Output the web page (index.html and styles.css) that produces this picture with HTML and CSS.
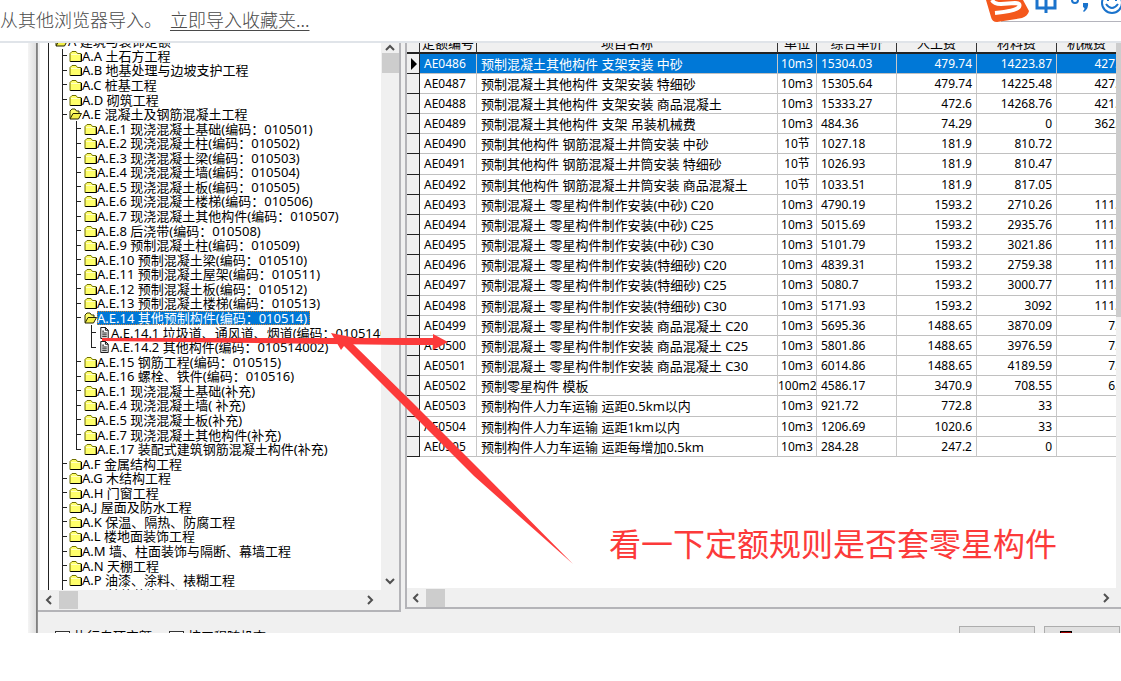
FILE: index.html
```html
<!DOCTYPE html>
<html lang="zh-CN">
<head>
<meta charset="utf-8">
<title>定额查询</title>
<link rel="stylesheet" href="styles.css">
</head>
<body>
<svg class="defs" aria-hidden="true">
  <symbol id="closed" viewBox="0 0 13 12"><path d="M1 3.5 3 1.5h4l1.5 2H12v8H1z" fill="#ffff6b" stroke="#6e6e00"/><path d="M1.5 11.5H12.5V4" fill="none" stroke="#000"/><path d="M2 4.5h9" stroke="#ffffc8"/></symbol>
  <symbol id="open" viewBox="0 0 13 12"><path d="M1 10.500V3l2-2h3l1.500 2H10v2.500" fill="#ffff6b" stroke="#333300"/><path d="M1 11 4 5.500h8.500L9.500 11z" fill="#f4f04a" stroke="#222200"/></symbol>
  <symbol id="doc" viewBox="0 0 13 13"><path d="M2.500.500h5l3 3v9h-8z" fill="#fff" stroke="#000"/><path d="M7.500.500v3h3M4 4.500h2M4 6.500h5M4 8.500h5M4 10.500h5" fill="none" stroke="#000"/></symbol>
</svg>

<header class="notice">
  <p class="notice-text">请从其他浏览器导入。 <a href="#">立即导入收藏夹...</a></p>
  <svg class="ime" viewBox="0 0 140 24" role="img" aria-label="输入法">
    <path d="M20 21.500H140" stroke="#b4b4bc"/>
    <path d="M5 0H42L48 11Q47 16 41 18L16 22Q11 22 10 17z" fill="#f4581c"/>
    <path d="M11 0Q13 4 20 4L34 3Q40 3 38 7Q35 11 14 13" fill="none" stroke="#fff" stroke-width="4"/>
    <path d="M56 0V8H74V0M65 0V13" fill="none" stroke="#1a73cc" stroke-width="3"/>
    <circle cx="94" cy="0" r="3" fill="none" stroke="#1a73cc" stroke-width="2"/>
    <path d="M102 3h5q1 5-4 9l-1-1q3-3 0-4z" fill="#1a73cc"/>
    <circle cx="131" cy="3" r="10" fill="none" stroke="#1a73cc" stroke-width="2"/>
    <path d="M125 4Q131 12 137 4M127 0v1M135 0v1" fill="none" stroke="#1a73cc" stroke-width="2"/>
  </svg>
</header>

<main class="shot">
  <div class="window">
    <div class="panes">
      <section class="tree-pane">
        <div class="tree-body">
          <div class="tree-view">
            <ul class="tree">
              <li class="l0"><svg><use href="#open"/></svg><span>A 建筑与装饰定额</span></li>
              <li class="l1"><svg><use href="#closed"/></svg><span>A.A 土石方工程</span></li>
              <li class="l1"><svg><use href="#closed"/></svg><span>A.B 地基处理与边坡支护工程</span></li>
              <li class="l1"><svg><use href="#closed"/></svg><span>A.C 桩基工程</span></li>
              <li class="l1"><svg><use href="#closed"/></svg><span>A.D 砌筑工程</span></li>
              <li class="l1"><svg><use href="#open"/></svg><span>A.E 混凝土及钢筋混凝土工程</span></li>
              <li class="l2"><svg><use href="#closed"/></svg><span>A.E.1 现浇混凝土基础(编码：010501)</span></li>
              <li class="l2"><svg><use href="#closed"/></svg><span>A.E.2 现浇混凝土柱(编码：010502)</span></li>
              <li class="l2"><svg><use href="#closed"/></svg><span>A.E.3 现浇混凝土梁(编码：010503)</span></li>
              <li class="l2"><svg><use href="#closed"/></svg><span>A.E.4 现浇混凝土墙(编码：010504)</span></li>
              <li class="l2"><svg><use href="#closed"/></svg><span>A.E.5 现浇混凝土板(编码：010505)</span></li>
              <li class="l2"><svg><use href="#closed"/></svg><span>A.E.6 现浇混凝土楼梯(编码：010506)</span></li>
              <li class="l2"><svg><use href="#closed"/></svg><span>A.E.7 现浇混凝土其他构件(编码：010507)</span></li>
              <li class="l2"><svg><use href="#closed"/></svg><span>A.E.8 后浇带(编码：010508)</span></li>
              <li class="l2"><svg><use href="#closed"/></svg><span>A.E.9 预制混凝土柱(编码：010509)</span></li>
              <li class="l2"><svg><use href="#closed"/></svg><span>A.E.10 预制混凝土梁(编码：010510)</span></li>
              <li class="l2"><svg><use href="#closed"/></svg><span>A.E.11 预制混凝土屋架(编码：010511)</span></li>
              <li class="l2"><svg><use href="#closed"/></svg><span>A.E.12 预制混凝土板(编码：010512)</span></li>
              <li class="l2"><svg><use href="#closed"/></svg><span>A.E.13 预制混凝土楼梯(编码：010513)</span></li>
              <li class="l2"><svg><use href="#open"/></svg><span class="picked">A.E.14 其他预制构件(编码：010514)</span></li>
              <li class="l3"><svg><use href="#doc"/></svg><span>A.E.14.1 垃圾道、通风道、烟道(编码：010514001)</span></li>
              <li class="l3 last"><svg><use href="#doc"/></svg><span>A.E.14.2 其他构件(编码：010514002)</span></li>
              <li class="l2"><svg><use href="#closed"/></svg><span>A.E.15 钢筋工程(编码：010515)</span></li>
              <li class="l2"><svg><use href="#closed"/></svg><span>A.E.16 螺栓、铁件(编码：010516)</span></li>
              <li class="l2"><svg><use href="#closed"/></svg><span>A.E.1 现浇混凝土基础(补充)</span></li>
              <li class="l2"><svg><use href="#closed"/></svg><span>A.E.4 现浇混凝土墙( 补充)</span></li>
              <li class="l2"><svg><use href="#closed"/></svg><span>A.E.5 现浇混凝土板(补充)</span></li>
              <li class="l2"><svg><use href="#closed"/></svg><span>A.E.7 现浇混凝土其他构件(补充)</span></li>
              <li class="l2 last"><svg><use href="#closed"/></svg><span>A.E.17 装配式建筑钢筋混凝土构件(补充)</span></li>
              <li class="l1"><svg><use href="#closed"/></svg><span>A.F 金属结构工程</span></li>
              <li class="l1"><svg><use href="#closed"/></svg><span>A.G 木结构工程</span></li>
              <li class="l1"><svg><use href="#closed"/></svg><span>A.H 门窗工程</span></li>
              <li class="l1"><svg><use href="#closed"/></svg><span>A.J 屋面及防水工程</span></li>
              <li class="l1"><svg><use href="#closed"/></svg><span>A.K 保温、隔热、防腐工程</span></li>
              <li class="l1"><svg><use href="#closed"/></svg><span>A.L 楼地面装饰工程</span></li>
              <li class="l1"><svg><use href="#closed"/></svg><span>A.M 墙、柱面装饰与隔断、幕墙工程</span></li>
              <li class="l1"><svg><use href="#closed"/></svg><span>A.N 天棚工程</span></li>
              <li class="l1"><svg><use href="#closed"/></svg><span>A.P 油漆、涂料、裱糊工程</span></li>
              <li class="l1"><svg><use href="#closed"/></svg><span>A.Q 其他装饰工程</span></li>
            </ul>
          </div>
          <div class="vbar">
            <svg class="arrow" viewBox="0 0 10 10"><path d="M1 7 5 3l4 4"/></svg>
            <div class="thumb"></div>
            <svg class="arrow end" viewBox="0 0 10 10"><path d="M1 3l4 4 4-4"/></svg>
          </div>
        </div>
        <div class="hbar tree-hbar">
          <svg class="arrow" viewBox="0 0 10 10"><path d="M7 1 3 5l4 4"/></svg>
          <div class="thumb"></div>
          <svg class="arrow end" viewBox="0 0 10 10"><path d="M3 1l4 4-4 4"/></svg>
        </div>
      </section>

      <section class="grid-pane">
        <div class="grid-body">
          <div class="grid-view">
            <table class="quota">
              <colgroup><col class="c-mark"><col class="c-code"><col class="c-name"><col class="c-unit"><col class="c-num"><col class="c-num"><col class="c-num"><col class="c-num"></colgroup>
              <thead><tr><th></th><th>定额编号</th><th>项目名称</th><th>单位</th><th>综合单价</th><th>人工费</th><th>材料费</th><th>机械费</th></tr></thead>
              <tbody>
                <tr class="current"><td><svg class="pointer" viewBox="0 0 8 12"><path d="M1 0l6 6-6 6z"/></svg></td><td>AE0486</td><td>预制混凝土其他构件 支架安装 中砂</td><td>10m3</td><td>15304.03</td><td>479.74</td><td>14223.87</td><td>427.92</td></tr>
                <tr><td></td><td>AE0487</td><td>预制混凝土其他构件 支架安装 特细砂</td><td>10m3</td><td>15305.64</td><td>479.74</td><td>14225.48</td><td>427.92</td></tr>
                <tr><td></td><td>AE0488</td><td>预制混凝土其他构件 支架安装 商品混凝土</td><td>10m3</td><td>15333.27</td><td>472.6</td><td>14268.76</td><td>421.92</td></tr>
                <tr><td></td><td>AE0489</td><td>预制混凝土其他构件 支架 吊装机械费</td><td>10m3</td><td>484.36</td><td>74.29</td><td>0</td><td>362.92</td></tr>
                <tr><td></td><td>AE0490</td><td>预制其他构件 钢筋混凝土井筒安装 中砂</td><td>10节</td><td>1027.18</td><td>181.9</td><td>810.72</td><td></td></tr>
                <tr><td></td><td>AE0491</td><td>预制其他构件 钢筋混凝土井筒安装 特细砂</td><td>10节</td><td>1026.93</td><td>181.9</td><td>810.47</td><td></td></tr>
                <tr><td></td><td>AE0492</td><td>预制其他构件 钢筋混凝土井筒安装 商品混凝土</td><td>10节</td><td>1033.51</td><td>181.9</td><td>817.05</td><td></td></tr>
                <tr><td></td><td>AE0493</td><td>预制混凝土 零星构件制作安装(中砂) C20</td><td>10m3</td><td>4790.19</td><td>1593.2</td><td>2710.26</td><td>111.92</td></tr>
                <tr><td></td><td>AE0494</td><td>预制混凝土 零星构件制作安装(中砂) C25</td><td>10m3</td><td>5015.69</td><td>1593.2</td><td>2935.76</td><td>111.92</td></tr>
                <tr><td></td><td>AE0495</td><td>预制混凝土 零星构件制作安装(中砂) C30</td><td>10m3</td><td>5101.79</td><td>1593.2</td><td>3021.86</td><td>111.92</td></tr>
                <tr><td></td><td>AE0496</td><td>预制混凝土 零星构件制作安装(特细砂) C20</td><td>10m3</td><td>4839.31</td><td>1593.2</td><td>2759.38</td><td>111.92</td></tr>
                <tr><td></td><td>AE0497</td><td>预制混凝土 零星构件制作安装(特细砂) C25</td><td>10m3</td><td>5080.7</td><td>1593.2</td><td>3000.77</td><td>111.92</td></tr>
                <tr><td></td><td>AE0498</td><td>预制混凝土 零星构件制作安装(特细砂) C30</td><td>10m3</td><td>5171.93</td><td>1593.2</td><td>3092</td><td>111.92</td></tr>
                <tr><td></td><td>AE0499</td><td>预制混凝土 零星构件制作安装 商品混凝土 C20</td><td>10m3</td><td>5695.36</td><td>1488.65</td><td>3870.09</td><td>7.92</td></tr>
                <tr><td></td><td>AE0500</td><td>预制混凝土 零星构件制作安装 商品混凝土 C25</td><td>10m3</td><td>5801.86</td><td>1488.65</td><td>3976.59</td><td>7.92</td></tr>
                <tr><td></td><td>AE0501</td><td>预制混凝土 零星构件制作安装 商品混凝土 C30</td><td>10m3</td><td>6014.86</td><td>1488.65</td><td>4189.59</td><td>7.92</td></tr>
                <tr><td></td><td>AE0502</td><td>预制零星构件 模板</td><td>100m2</td><td>4586.17</td><td>3470.9</td><td>708.55</td><td>6.92</td></tr>
                <tr><td></td><td>AE0503</td><td>预制构件人力车运输 运距0.5km以内</td><td>10m3</td><td>921.72</td><td>772.8</td><td>33</td><td></td></tr>
                <tr><td></td><td>AE0504</td><td>预制构件人力车运输 运距1km以内</td><td>10m3</td><td>1206.69</td><td>1020.6</td><td>33</td><td></td></tr>
                <tr><td></td><td>AE0505</td><td>预制构件人力车运输 运距每增加0.5km</td><td>10m3</td><td>284.28</td><td>247.2</td><td>0</td><td></td></tr>
              </tbody>
            </table>
          </div>
          <div class="vbar edge"><div class="thumb"></div></div>
        </div>
        <div class="hbar grid-hbar">
          <svg class="arrow" viewBox="0 0 10 10"><path d="M7 1 3 5l4 4"/></svg>
          <div class="thumb"></div>
          <svg class="arrow end" viewBox="0 0 10 10"><path d="M3 1l4 4-4 4"/></svg>
        </div>
      </section>
    </div>

    <footer class="options">
      <label><input type="checkbox">执行专项定额</label>
      <label><input type="checkbox">按工程随机查</label>
      <div class="actions">
        <button type="button" aria-label="确定"></button>
        <button type="button" aria-label="关闭"><i class="door"></i></button>
      </div>
    </footer>
  </div>
</main>

<svg class="marks" width="600" height="580" viewBox="0 0 600 580" aria-hidden="true">
  <path d="M102 338 405 338H433V334L448 342 433 350V345H405L102 341z"/>
  <path d="M331 333 356 338 351 342 411 401 480 470 573 564 474 476 410 412 344 346 341 350z"/>
</svg>
<p class="remark">看一下定额规则是否套零星构件</p>
</body>
</html>
```
FILE: styles.css
```css
* { box-sizing: border-box; }
body {
  margin: 0;
  position: relative;
  background: #fff;
  color: #000;
  font-family: "Noto Sans", "Noto Sans CJK SC", sans-serif;
  overflow-x: hidden;
}
p, ul { margin: 0; padding: 0; }
.defs { position: absolute; width: 0; height: 0; }

/* notice strip */
.notice {
  display: flex;
  height: 43px;
  padding-bottom: 2px;
  justify-content: space-between;
  border-bottom: 2px solid #e0e4e9;
  overflow: hidden;
}
.notice-text {
  margin-left: -18px;
  color: #4a4a4a;
  font-family: "Noto Sans CJK SC", sans-serif;
  font-size: 18px;
  font-weight: 300;
  line-height: 39px;
  white-space: pre;
}
.notice a { color: #4a4a4a; text-underline-offset: 3px; text-decoration-thickness: 1px; margin-left: 4px; }
.ime { width: 140px; height: 24px; flex: none; }

/* application window */
.shot {
  height: 590px;
  padding-left: 28px;
  overflow: hidden;
}
.window {
  height: 100%;
  display: flex;
  flex-direction: column;
  background: linear-gradient(90deg, #f4f4f4 0, #dedede 8px, #777 8px, #999 10px, #f0f0f0 10px);
  padding-left: 10px;
}
.panes { display: flex; align-items: flex-start; gap: 4px; }
.tree-pane {
  width: 363px;
  flex: none;
  border: solid #b4b4b8;
  border-width: 0 2px 2px 0;
  background: #f0f0f0;
}
.tree-body { display: flex; height: 547px; padding-left: 2px; }
.tree-view { flex: 1; background: #fff; overflow: hidden; }
.tree {
  display: grid;
  grid-auto-rows: 1fr;
  height: 568px;
  margin-top: -9px;
  list-style: none;
  font-size: 13px;
}
.tree li {
  --ink: linear-gradient(#222, #222);
  display: flex;
  align-items: center;
  min-height: 0;
  line-height: 14px;
  white-space: pre;
  background-repeat: no-repeat;
}
.tree svg { width: 13px; height: 12px; flex: none; }
.l0 {
  padding-left: 15px;
  background-image: var(--ink);
  background-position: 8px 0;
  background-size: 1px 100%;
}
.l1 {
  padding-left: 29px;
  background-image: var(--ink), var(--ink), var(--ink);
  background-position: 8px 0, 22px 0, 22px 50%;
  background-size: 1px 100%, 1px 100%, 5px 1px;
}
.l2 {
  padding-left: 44px;
  background-image: var(--ink), var(--ink), var(--ink), var(--ink);
  background-position: 8px 0, 22px 0, 36px 0, 36px 50%;
  background-size: 1px 100%, 1px 100%, 1px 100%, 5px 1px;
}
.l2.last { background-size: 1px 100%, 1px 100%, 1px 50%, 5px 1px; }
.l3 {
  padding-left: 58px;
  background-image: var(--ink), var(--ink), var(--ink), var(--ink), var(--ink);
  background-position: 8px 0, 22px 0, 36px 0, 51px 0, 51px 50%;
  background-size: 1px 100%, 1px 100%, 1px 100%, 1px 100%, 5px 1px;
}
.l3.last { background-size: 1px 100%, 1px 100%, 1px 100%, 1px 50%, 5px 1px; }
.picked { background: #0078d7; color: #fff; outline: 1px dotted #d08030; outline-offset: -1px; padding-right: 3px; }

/* scroll bars */
.vbar { width: 18px; flex: none; display: flex; flex-direction: column; align-items: center; background: #f0f0f0; }
.vbar .thumb { width: 17px; height: 20px; }
.hbar { display: flex; align-items: center; height: 20px; padding: 0 6px; background: #f0f0f0; }
.hbar .thumb { width: 19px; height: 18px; margin-left: 5px; }
.thumb { background: #cdcdcd; }
.arrow { width: 10px; height: 10px; flex: none; fill: none; stroke: #505050; stroke-width: 2; }
.vbar .end { margin: auto 0 4px; }
.hbar .end { margin-left: auto; }
.tree-hbar { padding-right: 24px; }
.grid-hbar { height: 19px; padding: 0 10px 0 4px; }
.vbar.edge { width: 5px; }
.vbar.edge .thumb { width: 5px; height: 274px; }

/* quota table */
.grid-pane { flex: 1; min-width: 0; border: solid #b4b4b8; border-width: 0 0 2px 2px; }
.grid-body { display: flex; height: 545px; }
.grid-view { flex: 1; min-width: 0; overflow: hidden; background: #fff; }
.quota {
  width: 730px;
  margin-top: -9px;
  table-layout: fixed;
  border-collapse: separate;
  border-spacing: 0;
  font-size: 12px;
  line-height: 18px;
}
.c-mark { width: 13px; }
.c-code { width: 57px; }
.c-name { width: 301px; }
.c-unit { width: 39px; }
.c-num { width: 80px; }
.quota th {
  height: 20px;
  padding: 1px 0 0;
  background: #f0f0f0;
  border-right: 1px solid #333;
  border-bottom: 2px solid #222;
  font-size: 13px;
  font-weight: 400;
  line-height: 17px;
  white-space: nowrap;
}
.quota th:last-child { padding-right: 20px; }
.quota td {
  height: 20px;
  padding: 0 4px;
  border-right: 1px solid #c8c8c8;
  border-bottom: 1px solid #c0c0c0;
  white-space: nowrap;
  overflow: hidden;
}
.quota tr:nth-child(6n) td { height: 21px; }
.quota td:nth-child(1) { padding: 0; background: #f0f0f0; border-right: 1px solid #222; border-bottom: 1px solid #222; }
.quota td:nth-child(3) { font-size: 13px; }
.quota td:nth-child(4) { padding: 0; text-align: center; }
.quota td:nth-child(n+6) { text-align: right; }
.current td:nth-child(n+2) { background: #0078d7; color: #fff; }
.pointer { display: block; width: 8px; height: 12px; margin-left: 3px; }

/* bottom row */
.options { display: flex; gap: 17px; align-items: flex-start; padding: 14px 1px 0 17px; font-size: 13px; line-height: 20px; }
.options label { display: flex; gap: 4px; white-space: nowrap; }
.options input { appearance: none; width: 15px; height: 15px; margin: 5px 0 0; border: 1px solid #333; background: #fff; border-radius: 0; }
.actions { display: flex; gap: 9px; margin-left: auto; }
.actions button { width: 76px; height: 26px; padding: 0; border: 1px solid #adadad; background: #e1e1e1; display: flex; }
.door { width: 12px; height: 16px; margin: 4px 0 0 15px; border: 1px solid #000; background: #a00000; }

/* red annotations drawn over the window */
.marks { position: absolute; left: 0; top: 0; fill: #fc3a3a; pointer-events: none; }
.remark {
  position: absolute;
  left: 609px;
  top: 518px;
  color: #fc3a3a;
  font-family: "Noto Sans CJK SC", sans-serif;
  font-size: 32px;
  line-height: 48px;
  white-space: nowrap;
}
```
